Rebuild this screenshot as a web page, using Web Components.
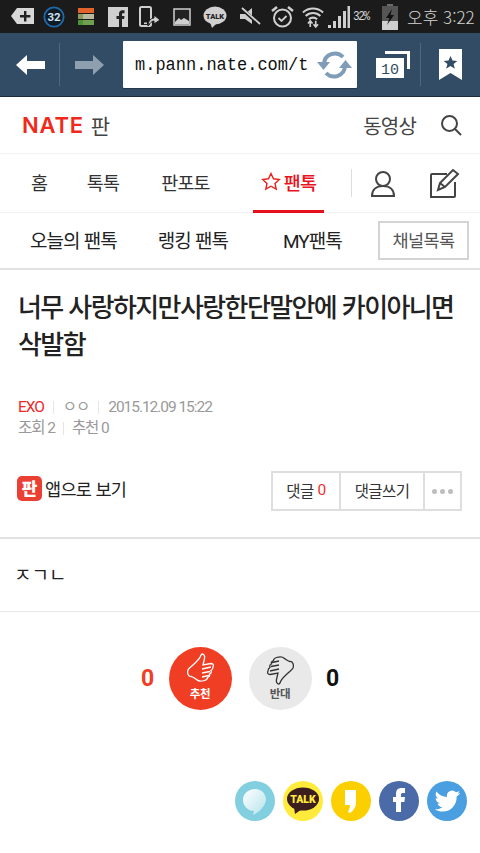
<!DOCTYPE html>
<html lang="ko"><head><meta charset="utf-8"><title>NATE 판</title>
<style>
html,body{margin:0;padding:0;background:#fff}
body{width:480px;height:853px;overflow:hidden;font-family:Roboto,"Noto Sans CJK KR",sans-serif;color:#222}
</style></head><body>
<status-bar></status-bar>
<browser-bar></browser-bar>
<site-header></site-header>
<main-nav></main-nav>
<sub-nav></sub-nav>
<article-head title-text="너무 사랑하지만사랑한단말안에 카이아니면 삭발함"></article-head>
<app-row></app-row>
<article-body>ㅈㄱㄴ</article-body>
<vote-box></vote-box>
<share-row></share-row>
<script>
const THUMB='M15 1c2 0 3 2 2.500 4.500L16 12l8-1.500c2 0 3 1.500 2 3.500 0 2-1 3-2 3.500 .5 1.500 0 3-1.500 3.500 .5 1.500-.5 3-2 3.500 0 1.500-1.500 2.500-3 3-3 1-6 1-8-1-1-1-3-2-5-3C1 24 0 20 1 17c1-2 3-3 5-5 3-3 7-6 8-10z M15 16l9-2 M15 20l8-1.500 M15 24l7-1.500';
function def(name,html){customElements.define(name,class extends HTMLElement{constructor(){super();this.attachShadow({mode:'open'}).innerHTML=typeof html==='function'?html(this):html}})}
def('status-bar',`<style>
:host{display:flex;align-items:center;height:33px;background:#1b1b1b;padding-left:11px;box-sizing:border-box;gap:0;position:relative}
svg{display:block;flex:none}
.pct{font:11px "Liberation Mono",monospace;color:#d8d8d8;letter-spacing:-1.3px;margin-left:3px;width:22px;transform:scaleY(1.15)}
.time{font:300 17px "Noto Sans CJK KR",sans-serif;color:#d4d4d4;margin-left:9px;white-space:nowrap}
</style>
<svg width="23" height="18" viewBox="0 0 23 18" style="margin-top:-1px"><path d="M6 1h17v16H6L0 9z" fill="#d8d8d8"/><path d="M13 8h-4v2.400h4v4h2.400v-4h4V8h-4V4H13z" fill="#222"/></svg>
<svg width="22" height="22" viewBox="0 0 24 24" style="margin-left:9px"><circle cx="12" cy="12" r="10.500" fill="#0e1a24" stroke="#1f6aa6" stroke-width="2"/><text x="12" y="16.500" text-anchor="middle" font-family="Roboto" font-weight="700" font-size="12.500" fill="#cfe0ee">32</text></svg>
<svg width="16" height="17" viewBox="0 0 16 17" style="margin-left:13px"><rect width="16" height="5" fill="#e3642a"/><rect y="6" width="16" height="5" fill="#b9b9a0"/><rect y="12" width="16" height="5" fill="#6fa04f"/><rect y="6" width="5" height="5" fill="#8a9a5a"/><rect y="12" width="5" height="5" fill="#4f8f3a"/></svg>
<svg width="20" height="20" viewBox="0 0 20 20" style="margin-left:14px"><rect width="20" height="20" fill="#d0d0d0"/><path d="M11 20v-8H8.500V9H11V6.800c0-2.300 1.300-3.500 3.400-3.500H16.500v3h-1.300c-.9 0-1.200.4-1.200 1.200V9h2.500l-.4 3H14v8z" fill="#222"/></svg>
<svg width="22" height="22" viewBox="0 0 22 22" style="margin-left:11px"><rect x="1" y="1" width="11" height="19" rx="1.500" fill="none" stroke="#cfcfcf" stroke-width="2"/><rect x="5" y="16.500" width="3" height="1.600" fill="#cfcfcf"/><path d="M9 20c0-5 3-8 6-8V9l6 5-6 4v-3c-2 0-4 2-6 5z" fill="#cfcfcf" stroke="#1b1b1b"/></svg>
<svg width="18" height="18" viewBox="0 0 18 18" style="margin-left:12px"><rect x="1" y="1" width="16" height="16" fill="#222" stroke="#cfcfcf" stroke-width="1.500"/><path d="M2 14l4-4 2 2 3-2 5 3v3H2z" fill="#cfcfcf"/></svg>
<svg width="24" height="22" viewBox="0 0 24 22" style="margin-left:12px"><ellipse cx="12" cy="9.500" rx="11.500" ry="9" fill="#d0d0d0"/><path d="M7 16l2 6 5-5z" fill="#d0d0d0"/><text x="12" y="12.500" text-anchor="middle" font-family="Roboto" font-weight="900" font-size="7.500" fill="#222">TALK</text></svg>
<svg width="21" height="20" viewBox="0 0 21 20" style="margin-left:13px"><path d="M0 7h5l7-6v16l-7-5H0z" fill="#cfcfcf"/><path d="M1 1l19 17" stroke="#1b1b1b" stroke-width="3.500"/><path d="M2 1l18 16" stroke="#cfcfcf" stroke-width="1.800"/></svg>
<svg width="23" height="24" viewBox="0 0 23 24" style="margin-left:10px"><circle cx="11.500" cy="13" r="8.500" fill="none" stroke="#cfcfcf" stroke-width="2"/><path d="M7.500 13l3 3 5-5" fill="none" stroke="#cfcfcf" stroke-width="1.800"/><path d="M1 6l5-4M22 6l-5-4" stroke="#cfcfcf" stroke-width="2.500"/></svg>
<svg width="22" height="24" viewBox="0 0 24 24" style="margin-left:8px"><path d="M1 7a16 16 0 0 1 22 0M4 11a11.500 11.500 0 0 1 16 0M7.500 14.500a6.500 6.500 0 0 1 9 0" fill="none" stroke="#d0d0d0" stroke-width="2.200"/><path d="M9 16v7M6.500 19l2.500-3 2.500 3M15 23v-7M12.500 20l2.500 3 2.500-3" fill="none" stroke="#d0d0d0" stroke-width="1.800"/></svg>
<svg width="22" height="24" viewBox="0 0 22 24" style="margin-left:4px"><path d="M0 23h3v-3H0zM5 23h3v-7H5zM10 23h3V11h-3zM15 23h3V6h-3zM19.500 23H22V1h-2.500z" fill="#cfcfcf"/></svg>
<span class="pct">32%</span>
<svg width="16" height="26" viewBox="0 0 16 26" style="margin-left:7px"><rect x="5" y="0" width="6" height="3" fill="#6a6a6a"/><rect y="2" width="16" height="24" fill="#555"/><rect y="17" width="16" height="9" fill="#cfcfcf"/><path d="M10 5l-6 9h3.500L5 21l7-10H8.500z" fill="#111"/></svg>
<span class="time">오후 3:22</span>`);
def('browser-bar',`<style>
:host{display:flex;align-items:center;height:64px;box-sizing:border-box;background:#334c66;border-bottom:1px solid #1d2c3b;padding:0}
svg{display:block;flex:none}
.sep{width:1px;height:43px;background:#4f677f;flex:none}
.url{flex:none;width:234px;height:47px;box-sizing:border-box;background:#fff;border-radius:1px;margin-left:19px;position:relative;display:flex;align-items:center;padding-left:12px;box-shadow:0 1px 1px rgba(0,0,0,.3)}
.url span{font:17px "Liberation Mono",monospace;color:#111;white-space:nowrap;display:block;transform-origin:left center;transform:scaleY(1.12)}
.url svg{position:absolute;left:194px;top:9px}
</style>
<svg width="29" height="20" viewBox="0 0 29 20" style="margin-left:16px"><path d="M0 10L11 0v6h18v8H11v6z" fill="#fff"/></svg>
<span class="sep" style="margin-left:14px"></span>
<svg width="29" height="20" viewBox="0 0 29 20" style="margin-left:15px"><path d="M29 10L18 0v6H0v8h18v6z" fill="#8ea0b0"/></svg>
<div class="url"><span>m.pann.nate.com/t</span>
<svg width="35" height="30" viewBox="0 0 35 30"><path d="M7 14a11 11 0 0 1 19-7" fill="none" stroke="#7f9db8" stroke-width="4"/><path d="M28 16a11 11 0 0 1-19 7" fill="none" stroke="#7f9db8" stroke-width="4"/><path d="M0 12h13l-6.500 8zM35 18H22l6.500-8z" fill="#7f9db8"/></svg></div>
<svg width="34" height="27" viewBox="0 0 34 27" style="margin-left:19px"><path d="M9 0h25v18h-3V3H9z" fill="#fff"/><rect x="0" y="7" width="28" height="20" fill="#fff"/><text x="14" y="23" text-anchor="middle" font-family="Liberation Mono" font-size="15" fill="#334c66">10</text></svg>
<span class="sep" style="margin-left:10px"></span>
<svg width="23" height="31" viewBox="0 0 23 31" style="margin-left:18px"><path d="M0 0h23v31l-11.500-7L0 31z" fill="#fff"/><path d="M11.500 7l2 4.500 4.800.4-3.700 3.100 1.200 4.700-4.300-2.600-4.300 2.600 1.200-4.700L4.700 11.900l4.800-.4z" fill="#334c66"/></svg>`);
def('site-header',`<style>
:host{display:flex;align-items:center;height:57px;box-sizing:border-box;border-bottom:1px solid #f1f1f1;padding:0 18px 0 22px;background:#fff}
.logo{font:600 22px Inter,sans-serif;color:#f0291a;letter-spacing:.8px;display:flex;align-items:center}
.pan{font:400 21px "Noto Sans CJK KR",sans-serif;color:#444;margin-left:7px}
.v{margin-left:auto;font:400 20px "Noto Sans CJK KR",sans-serif;color:#444;letter-spacing:-.8px}
svg{display:block;margin-left:24px}
</style><span class="logo">NATE</span><span class="pan">판</span><span class="v">동영상</span>
<svg width="22" height="22" viewBox="0 0 22 22"><circle cx="9.500" cy="9.500" r="7.500" fill="none" stroke="#444" stroke-width="2"/><path d="M15 15l6 6" stroke="#444" stroke-width="2"/></svg>`);
def('main-nav',`<style>
:host{display:flex;align-items:stretch;height:59px;box-sizing:border-box;border-bottom:1px solid #f1f1f1;background:#fff;font:400 18.500px "Noto Sans CJK KR",sans-serif;letter-spacing:-.8px;color:#333}
a{display:flex;align-items:center;justify-content:center;flex:none;box-sizing:border-box;padding-bottom:2px}
.on{color:#e8131e;font-weight:500;border-bottom:3px solid #e60f1e;margin-bottom:-1px;gap:3px;padding-bottom:1px}
.sep{width:1px;height:28px;background:#ddd;align-self:center;margin-left:27px;flex:none}
svg{display:block;flex:none}
.i{align-self:center}
</style><a style="width:78px">홈</a><a style="width:50px">톡톡</a><a style="width:115px;">판포토</a>
<a class="on" style="width:71px;margin-left:10px"><svg width="20" height="19" viewBox="0 0 20 19"><path d="M10 1.500l2.500 5.300 5.800.7-4.300 3.900 1.200 5.700-5.200-2.900-5.200 2.900L6 11.400 1.700 7.500l5.800-.7z" fill="none" stroke="#e8231e" stroke-width="1.400"/></svg>팬톡</a>
<span class="sep"></span>
<svg class="i" width="26" height="27" viewBox="0 0 26 27" style="margin-left:18px"><circle cx="13" cy="9" r="7" fill="none" stroke="#444" stroke-width="2"/><path d="M2 26c0-6 4-10 11-10s11 4 11 10z" fill="none" stroke="#444" stroke-width="2"/></svg>
<svg class="i" width="31" height="31" viewBox="0 0 31 31" style="margin-left:33px"><path d="M18 6H3a1.500 1.500 0 0 0-1 1v22h23a1 1 0 0 0 1-1V14" fill="none" stroke="#444" stroke-width="2"/><path d="M9 22l2-7L24 2l5 4-13 13z M11 15l5 4" fill="none" stroke="#444" stroke-width="2"/></svg>`);
def('sub-nav',`<style>
:host{display:flex;align-items:center;height:57px;box-sizing:border-box;border-bottom:2px solid #e2e2e2;background:#fff;font:400 19px "Noto Sans CJK KR",Roboto,sans-serif;letter-spacing:-1px;color:#222}
a{flex:none;display:block;text-align:center;padding-bottom:2px}
.my{font-family:Roboto,"Noto Sans CJK KR",sans-serif}
.b{margin-left:auto;margin-right:11px;width:91px;height:39px;box-sizing:border-box;border:2px solid #d4d4d4;display:flex;align-items:center;justify-content:center;font-size:17.500px;color:#555;letter-spacing:-.6px;padding-bottom:2px}
</style><a style="margin-left:30px">오늘의 팬톡</a><a style="margin-left:41px">랭킹 팬톡</a><a class="my" style="margin-left:55px">MY팬톡</a><span class="b">채널목록</span>`);
def('article-head',el=>`<style>
:host{display:block;padding:17px 18px 0;background:#fff}
h1{margin:0;font:500 26px/37px "Noto Sans CJK KR",sans-serif;letter-spacing:-1.6px;color:#222}
.m{margin-top:36px;font:400 15.500px/21px Roboto,"Noto Sans CJK KR",sans-serif;letter-spacing:-1.05px;color:#999;display:flex;align-items:center}
.m+.m{margin-top:0}
.red{color:#ee2a2a}
i{display:block;width:1px;height:13px;background:#e6e6e6;margin:0 9px}
</style><h1>${el.getAttribute('title-text')}</h1>
<div class="m"><span class="red">EXO</span><i></i><span>ㅇㅇ</span><i></i><span>2015.12.09 15:22</span></div>
<div class="m"><span>조회 2</span><i style="margin:0 8px"></i><span>추천 0</span></div>`);
def('app-row',`<style>
:host{display:flex;align-items:center;height:100px;box-sizing:border-box;border-bottom:2px solid #e2e2e2;padding:0 18px 0 17px;background:#fff}
.ic{width:25px;height:25px;border-radius:5px;background:#ec3f33;color:#fff;font:900 17px/24px "Noto Sans CJK KR",sans-serif;text-align:center;flex:none}
.t{font:400 17.500px "Noto Sans CJK KR",sans-serif;letter-spacing:-.7px;margin-left:3px;color:#222}
.g{margin-left:auto;margin-top:5px;display:flex;height:40px;box-sizing:border-box;border:2px solid #dedede;font:400 15.500px "Noto Sans CJK KR",Roboto,sans-serif;letter-spacing:-.6px;color:#333}
.g span{display:flex;align-items:center;justify-content:center;box-sizing:border-box;padding-bottom:2px}
.g span+span{border-left:2px solid #dedede}
.r{color:#f03030;margin-left:4px;font-family:Roboto;font-style:normal}
b{display:block;width:5px;height:5px;border-radius:50%;background:#bdbdbd;margin:0 1.500px}
</style><span class="ic">판</span><span class="t">앱으로 보기</span>
<div class="g"><span style="width:66px">댓글<em class="r">0</em></span><span style="width:84px">댓글쓰기</span><span style="width:37px;padding:2px 0 0"><b></b><b></b><b></b></span></div>`);
def('article-body',`<style>
:host{display:flex;align-items:center;height:73px;box-sizing:border-box;border-bottom:1px solid #e8e8e8;padding:0 15px 4px 14px;background:#fff;font:400 19px "Noto Sans CJK KR",sans-serif;color:#222}
</style><slot></slot>`);
def('vote-box',`<style>
:host{display:flex;align-items:center;justify-content:center;height:132px;box-sizing:border-box;background:#fff;font:700 23px Roboto,sans-serif}
.n{width:22px;text-align:center}
.c{width:63px;height:63px;border-radius:50%;display:flex;flex-direction:column;align-items:center;box-sizing:border-box;padding-top:6px;font:700 11.500px/14px "Noto Sans CJK KR",sans-serif;letter-spacing:-.3px;flex:none}
svg{display:block;margin-bottom:1px}
</style><span class="n" style="color:#ef3e24;margin-right:10px;margin-left:-7px">0</span>
<div class="c" style="background:#ef3e24;color:#fff"><svg width="27" height="32" viewBox="0 0 27 32"><path d="${THUMB}" fill="none" stroke="#fff" stroke-width="1.300"/></svg><span>추천</span></div>
<div class="c" style="background:#e9e9e9;color:#555;margin-left:17px"><svg width="27" height="32" viewBox="0 0 27 32"><g transform="rotate(180 13.500 16)"><path d="${THUMB}" fill="none" stroke="#333" stroke-width="1.300"/></g></svg><span>반대</span></div>
<span class="n" style="color:#111;margin-left:10px;margin-right:-7px">0</span>`);
def('share-row',`<style>
:host{display:flex;justify-content:flex-end;gap:8px;padding:37px 13px 0 0;background:#fff}
svg{display:block}
</style>
<svg width="40" height="40" viewBox="0 0 40 40"><circle cx="20" cy="20" r="20" fill="#82cfe0"/><defs><linearGradient id="g" x1="0" y1="0" x2="1" y2="1"><stop offset="0" stop-color="#fff"/><stop offset="1" stop-color="#b5e3ec"/></linearGradient></defs><path d="M20 8c-7 0-12 5-12 11s5 11 11 11l-1 4c5-2 12-8 13-15 0-6-4-11-11-11z" fill="url(#g)"/></svg>
<svg width="40" height="40" viewBox="0 0 40 40"><circle cx="20" cy="20" r="20" fill="#ffeb3b"/><ellipse cx="20" cy="18" rx="16" ry="11.500" fill="#3c1e1e"/><path d="M11 26l1 7 7-5z" fill="#3c1e1e"/><text x="20" y="22" text-anchor="middle" font-family="Roboto" font-weight="900" font-size="10.500" fill="#ffeb3b">TALK</text></svg>
<svg width="40" height="40" viewBox="0 0 40 40"><circle cx="20" cy="20" r="20" fill="#fcd000"/><path d="M14 9h11v13c0 4-3 8-6 10l-2-1c1-2 2-5 2-7h-5z" fill="#fff"/></svg>
<svg width="40" height="40" viewBox="0 0 40 40"><circle cx="20" cy="20" r="20" fill="#4a6ba8"/><path d="M17 31V21h-3v-5h3v-3c0-4 2-6 5.500-6H26v5h-2c-1.500 0-2 .5-2 2v2h4l-.6 5H22v10z" fill="#fff"/></svg>
<svg width="40" height="40" viewBox="0 0 40 40"><circle cx="20" cy="20" r="20" fill="#4a9fe0"/><path d="M33 12c-1 .5-2 .8-3 1 1-.6 2-1.700 2.400-3-1 .6-2.200 1-3.400 1.300a5.300 5.300 0 0 0-9 4.800c-4.300-.2-8-2.300-10.600-5.500-1.400 2.400-.7 5.500 1.600 7-.8 0-1.600-.2-2.400-.6 0 2.600 1.800 4.800 4.300 5.300-.8.200-1.600.2-2.400.1.700 2.100 2.600 3.600 5 3.700-2.300 1.800-5 2.500-7.800 2.200 9 5.700 22 .7 22-12.800 1.500-1 2.400-2 3.300-3z" fill="#fff"/></svg>`);
</script>
</body></html>
